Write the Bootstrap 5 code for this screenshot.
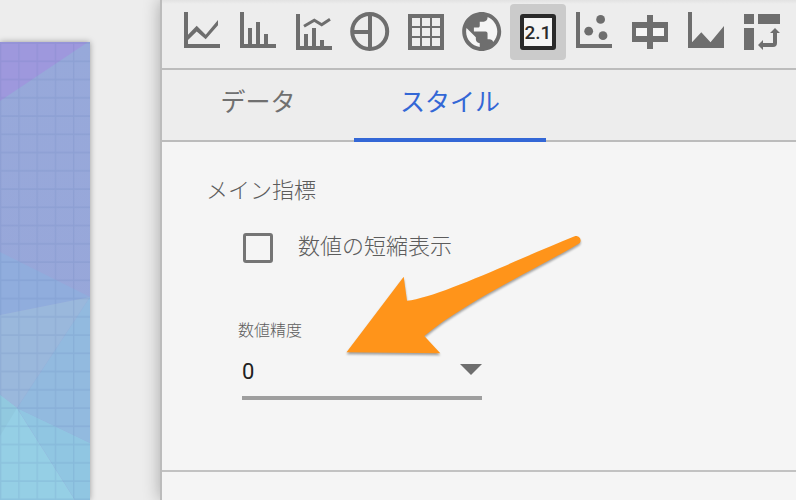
<!DOCTYPE html>
<html lang="ja">
<head>
<meta charset="utf-8">
<meta name="viewport" content="width=device-width, initial-scale=1">
<title>スタイル</title>
<link href="https://cdn.jsdelivr.net/npm/bootstrap@5.3.0/dist/css/bootstrap.min.css" rel="stylesheet">
<style>
body { font-family: Roboto, "Noto Sans CJK JP", sans-serif; background: #ededed; color: #707070; }
.stage { width: 160px; padding-top: 42px; }
.report-page { width: 90px; box-shadow: 0 0 6px rgba(0,0,0,.35); background: #98a6d9; }
.props { border-left: 2px solid #bcbcbc; background: #f5f5f5; box-shadow: 0 0 16px rgba(0,0,0,.3); min-width: 0; }
.chart-bar { padding: 4px 0 8px 12px; background: linear-gradient(#e2e2e2, #ededed 4px); border-bottom: 2px solid #bcbcbc; }
.chart-btn { width: 56px; height: 56px; padding: 0; border: 0; border-radius: 4px; background: none; color: #6e6e6e; }
.chart-btn.active { background: #cbcbcb; color: #2a2a2a; }
.chart-btn svg { width: 56px; height: 56px; fill: currentColor; }
.chart-btn text { font: 500 19px Roboto, sans-serif; }
.prop-tabs { background: #ededed; border-bottom: 2px solid #bcbcbc; }
.prop-tabs .nav-link { width: 192px; height: 72px; margin-bottom: -2px; padding: 0 0 4px; border: 0; border-radius: 0; border-bottom: 4px solid transparent; color: #707070; font-size: 25px; line-height: 66px; text-align: center; }
.prop-tabs .nav-link.active { color: #3367d6; border-bottom-color: #3367d6; }
.metric { padding: 33px 44px 70px; border-bottom: 2px solid #c2c2c2; color: #5c5c5c; font-weight: 300; }
.metric h2 { font-size: 22px; line-height: 32px; font-weight: 300; margin-bottom: 26px; }
.compact-row { gap: 25px; padding-left: 37px; margin-bottom: 56px; font-size: 22px; line-height: 28px; }
.compact-row input { appearance: none; width: 30px; height: 30px; margin: 0; border: 3px solid #757575; border-radius: 3px; }
.compact-row input:checked { background: #3367d6; }
.precision { padding-left: 32px; }
.precision label { font-size: 16px; line-height: 24px; margin-bottom: 3px; }
.picker { width: 240px; margin-left: 4px; border-bottom: 4px solid #9e9e9e; }
.picker select { appearance: none; width: 100%; height: 50px; padding: 0; border: 0; background: none; color: #212121; font-size: 22px; font-weight: 400; }
.picker svg { width: 22px; height: 11px; margin: 0 0 3px -22px; fill: #6e6e6e; pointer-events: none; }
.callout-arrow { top: 220px; left: 330px; width: 270px; height: 150px; filter: drop-shadow(0 2px 1px rgba(0,0,0,.35)); pointer-events: none; }
</style>
</head>
<body>
<div class="d-flex vh-100 overflow-hidden position-relative">
  <main class="stage flex-shrink-0 d-flex flex-column">
    <div class="report-page flex-grow-1 overflow-hidden">
      <svg width="90" height="458" viewBox="0 0 90 458" aria-hidden="true">
        <defs>
          <pattern id="cells" width="18.25" height="18.25" patternUnits="userSpaceOnUse"><path d="M0 1H18.25M.5 0V18.25" stroke="#5068a8" stroke-opacity=".13" stroke-width="1.7"/></pattern>
          <linearGradient id="dusk" x2="0" y2="1"><stop offset="0" stop-color="#97a9da"/><stop offset="1" stop-color="#98a5d9"/></linearGradient>
        </defs>
        <rect width="90" height="458" fill="url(#dusk)"/>
        <path d="M0 0H88L0 59Z" fill="#9e98dd"/>
        <path d="M0 210L90 255L0 273Z" fill="#90addd"/>
        <path d="M0 273L90 255L17 366L0 353Z" fill="#9ab8dc"/>
        <path d="M90 255L17 366L90 401Z" fill="#92badf"/>
        <path d="M0 353L17 366L75 458H0Z" fill="#95cfe5"/>
        <path d="M0 353L17 366L0 394Z" fill="#91c9df"/>
        <path d="M17 366L90 401V458H75Z" fill="#90c6e2"/>
        <rect width="90" height="458" fill="url(#cells)"/>
      </svg>
    </div>
  </main>

  <aside class="props flex-grow-1">
    <div class="chart-bar d-flex overflow-hidden" role="toolbar" aria-label="グラフの種類">
      <button class="chart-btn flex-shrink-0" aria-label="期間"><svg viewBox="0 0 56 56"><path d="M10 8h4v32h32v4H10zM14 30.7L22.7 21.7L31.7 30.7L44 16V21.3L31.7 35.3L22.7 27.5L14 36Z"/></svg></button>
      <button class="chart-btn flex-shrink-0" aria-label="棒グラフ"><svg viewBox="0 0 56 56"><path d="M10 8h4v32h32v4H10zM18 24h4v16h-4zM26 18h4v22h-4zM34 30h4v10h-4z"/></svg></button>
      <button class="chart-btn flex-shrink-0" aria-label="複合グラフ"><svg viewBox="0 0 56 56"><path d="M10 10h4v32h32v4H10zM18 30h4v12h-4zM26 24h4v18h-4zM34 36h4v6h-4z"/><path d="M18 22.3L28.3 16.3L35.7 20.7L44 15.3" fill="none" stroke="currentColor" stroke-width="3"/></svg></button>
      <button class="chart-btn flex-shrink-0" aria-label="円グラフ"><svg viewBox="0 0 56 56"><circle cx="27.7" cy="27.5" r="17.5" fill="none" stroke="currentColor" stroke-width="4"/><path d="M26 10h4v36h-4zM10 26h16v4H10z"/></svg></button>
      <button class="chart-btn flex-shrink-0" aria-label="表"><svg viewBox="0 0 56 56"><path fill-rule="evenodd" d="M10 10h36v36H10zM14 14v8h8v-8zM24 14v8h8v-8zM34 14v8h8v-8zM14 24v8h8v-8zM24 24v8h8v-8zM34 24v8h8v-8zM14 34v8h8v-8zM24 34v8h8v-8zM34 34v8h8v-8z"/></svg></button>
      <button class="chart-btn flex-shrink-0" aria-label="地図"><svg viewBox="0 0 56 56"><circle cx="27.7" cy="27.5" r="18" fill="#f5f5f5"/><path transform="translate(4.3 4.1) scale(1.95)" d="M12 2C6.48 2 2 6.48 2 12s4.48 10 10 10 10-4.48 10-10S17.52 2 12 2zm-1 17.93c-3.95-.49-7-3.85-7-7.93 0-.62.08-1.21.21-1.79L9 15v1c0 1.1.9 2 2 2v1.93zm6.9-2.54c-.26-.81-1-1.39-1.9-1.39h-1v-3c0-.55-.45-1-1-1H8v-2h2c.55 0 1-.45 1-1V7h2c1.1 0 2-.9 2-2v-.41c2.93 1.19 5 4.06 5 7.41 0 2.08-.8 3.97-2.1 5.39z"/></svg></button>
      <button class="chart-btn active flex-shrink-0" aria-label="スコアカード"><svg viewBox="0 0 56 56"><rect x="12" y="12" width="32" height="32" rx="1" fill="#f5f5f5" stroke="currentColor" stroke-width="4" stroke-linejoin="round"/><text x="28" y="35" text-anchor="middle">2.1</text></svg></button>
      <button class="chart-btn flex-shrink-0" aria-label="散布図"><svg viewBox="0 0 56 56"><path d="M10 8h4v32h32v4H10z"/><circle cx="34.6" cy="15.4" r="4.4"/><circle cx="22.7" cy="27.2" r="4.4"/><circle cx="37" cy="31.7" r="4.4"/></svg></button>
      <button class="chart-btn flex-shrink-0" aria-label="ブレット"><svg viewBox="0 0 56 56"><path d="M10 18h36v20H10zM25 11h6v34h-6z"/><path d="M14 24h11v8H14zM31 24h11v8H31z" fill="#f5f5f5"/></svg></button>
      <button class="chart-btn flex-shrink-0" aria-label="面グラフ"><svg viewBox="0 0 56 56"><path d="M10 8h4v30.3L23.3 28.3L32.5 38.3L46 22V44H10z"/></svg></button>
      <button class="chart-btn flex-shrink-0" aria-label="ピボット"><svg viewBox="0 0 56 56"><path d="M10 10h10v10H10zM24 10h22v10H24zM10 24h10v22H10zM41 24l5 5H36zM24 41l5-5v10z"/><path d="M41 28V39Q41 41 39 41H28" fill="none" stroke="currentColor" stroke-width="4"/></svg></button>
    </div>

    <nav class="prop-tabs nav nav-tabs flex-nowrap">
      <a class="nav-link" href="#data">データ</a>
      <a class="nav-link active bg-transparent" href="#style" aria-current="page">スタイル</a>
    </nav>

    <section class="metric" id="style">
      <h2>メイン指標</h2>
      <div class="compact-row d-flex align-items-start">
        <input type="checkbox" id="compact">
        <label for="compact">数値の短縮表示</label>
      </div>
      <div class="precision">
        <label class="d-block" for="precision">数値精度</label>
        <div class="picker d-flex align-items-center">
          <select id="precision"><option>0</option><option>1</option><option>2</option><option>3</option></select>
          <svg class="flex-shrink-0" viewBox="0 0 22 11" aria-hidden="true"><path d="M0 0H22L11 11Z"/></svg>
        </div>
      </div>
    </section>
  </aside>

  <svg class="callout-arrow position-absolute" viewBox="330 220 270 150" aria-hidden="true"><path fill="#ff941a" d="M346.5 352.3L403.7 276.7L407 300.7C440 297 520 258 575.3 236C580 235.500 582.500 241 579 243.500C540 267 465 302 424.300 336L440.300 353.300Z"/></svg>
</div>
<script src="https://cdn.jsdelivr.net/npm/bootstrap@5.3.0/dist/js/bootstrap.bundle.min.js"></script>
</body>
</html>
